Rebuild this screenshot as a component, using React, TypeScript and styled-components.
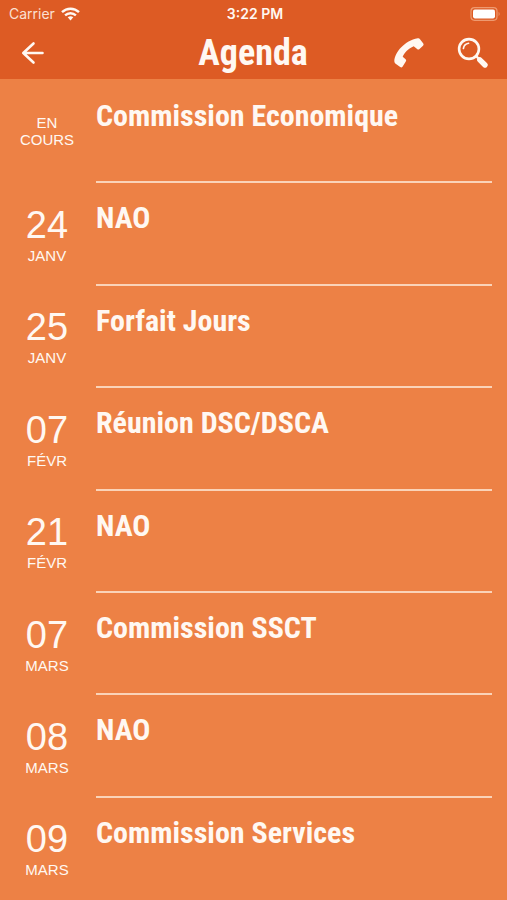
import React from "react";
import styled, { createGlobalStyle } from "styled-components";

const GlobalStyle = createGlobalStyle`
  * { box-sizing: border-box; }
  body { margin: 0; background: #ed8145; }
`;

const Screen = styled.div`
  display: flex;
  flex-direction: column;
  min-height: 100vh;
  background: #ed8145;
  color: #fff8f2;
  font-family: "Liberation Sans", Arial, sans-serif;
`;

const Header = styled.header`
  background: #dd5b24;
`;

const StatusBar = styled.div`
  display: grid;
  grid-template-columns: 1fr auto 1fr;
  align-items: center;
  height: 28px;
  padding: 0 6px 0 9px;
  font-family: Inter, "Liberation Sans", sans-serif;
  font-size: 14px;
  line-height: 18px;
`;

const Carrier = styled.span`
  display: flex;
  align-items: center;
  gap: 6px;
  color: #fbe0d2;
`;

const Clock = styled.time`
  font-weight: 600;
`;

const Battery = styled.span`
  display: flex;
  justify-content: flex-end;
`;

const NavBar = styled.nav`
  display: grid;
  grid-template-columns: 1fr auto 1fr;
  align-items: center;
  height: 51px;
  padding: 0 17px 2px 16px;
`;

const Title = styled.h1`
  margin: 0;
  font-family: "Roboto Condensed", "Arial Narrow", "Liberation Sans", sans-serif;
  font-size: 36px;
  line-height: 40px;
  font-weight: 700;
`;

const Actions = styled.div`
  display: flex;
  justify-content: flex-end;
  gap: 30px;
`;

const IconButton = styled.button`
  display: flex;
  align-items: center;
  justify-content: center;
  width: 34px;
  height: 40px;
  padding: 0;
  border: 0;
  background: none;
  color: #fff8f2;
  cursor: pointer;
`;

const List = styled.ul`
  flex: 1;
  display: grid;
  grid-auto-rows: 1fr;
  margin: 0;
  padding: 2px 15px 0 0;
  list-style: none;
`;

const Row = styled.li`
  display: grid;
  grid-template-columns: 94px 1fr;
  column-gap: 2px;
  min-height: 100px;
`;

const DateCell = styled.div`
  display: flex;
  flex-direction: column;
  align-items: center;
  justify-content: center;
  padding-bottom: 2px;
  text-align: center;
`;

const Day = styled.span`
  font-size: 38px;
  line-height: 44px;
`;

const Month = styled.span`
  max-width: 64px;
  font-size: 15px;
  line-height: 17px;
`;

const EventCell = styled.div`
  padding-top: 16px;
  border-bottom: 2px solid #fad3b8;

  ${Row}:last-child & {
    border-bottom: 0;
  }
`;

const EventTitle = styled.h2`
  margin: 0;
  font-family: "Roboto Condensed", "Arial Narrow", "Liberation Sans", sans-serif;
  font-size: 30px;
  line-height: 38px;
  font-weight: 700;
`;

type AgendaEvent = { day?: string; label: string; title: string };

const events: AgendaEvent[] = [
  { label: "EN COURS", title: "Commission Economique" },
  { day: "24", label: "JANV", title: "NAO" },
  { day: "25", label: "JANV", title: "Forfait Jours" },
  { day: "07", label: "FÉVR", title: "Réunion DSC/DSCA" },
  { day: "21", label: "FÉVR", title: "NAO" },
  { day: "07", label: "MARS", title: "Commission SSCT" },
  { day: "08", label: "MARS", title: "NAO" },
  { day: "09", label: "MARS", title: "Commission Services" },
];

const WifiIcon = () => (
  <svg width="19" height="14" viewBox="0 0 19 14" fill="none" stroke="#fff8f2" strokeWidth="2.4" aria-hidden="true">
    <path d="M1 5.2C5.8.6 13.2.6 18 5.2" />
    <path d="M4.1 8.4C7.2 5.5 11.8 5.5 14.9 8.4" />
    <path d="M6.7 10.3Q9.5 8 12.3 10.3L9.5 13.5Z" fill="#fff8f2" stroke="none" />
  </svg>
);

const BatteryIcon = () => (
  <svg width="31" height="14" viewBox="0 0 31 14" aria-hidden="true">
    <rect x="1" y=".7" width="26" height="12.6" rx="3.5" fill="none" stroke="#ee9a70" strokeWidth="1.2" />
    <rect x="3" y="2.6" width="22" height="8.8" rx="1.8" fill="#fff" />
    <path d="M28.6 4.8Q30.6 7 28.6 9.2Z" fill="#ee9a70" />
  </svg>
);

const BackIcon = () => (
  <svg width="24" height="24" viewBox="0 0 24 24" fill="none" stroke="currentColor" strokeWidth="2.6" strokeLinecap="round" strokeLinejoin="round" aria-hidden="true">
    <path d="M12.5 2.5 2.3 12l10.2 9.5M2.300 12H21.500" />
  </svg>
);

const PhoneIcon = () => (
  <svg width="32" height="32" viewBox="0 0 32 32" fill="currentColor" aria-hidden="true">
    <path d="M1.300 23.800C2 15.500 11.500 3.500 24.800 1.300Q26.200 1 27 2.200L30.300 6.500Q31.100 7.700 30 8.700L26.500 12Q25.300 13.100 24.100 12L20.700 9.200C15.500 11.300 11.300 15.500 9.700 19.700L12.600 22.300Q13.700 23.300 12.800 24.600L9.500 29.700Q8.500 31 7.200 30L2.300 26.600Q1.200 25.600 1.300 23.800Z" />
  </svg>
);

const SearchIcon = () => (
  <svg width="32" height="32" viewBox="0 0 32 32" fill="none" stroke="currentColor" strokeLinecap="round" aria-hidden="true">
    <circle cx="12" cy="12" r="9.9" strokeWidth="2.6" />
    <path d="M6.4 11.5C6.9 8.5 8.8 6.7 11.6 6.3" strokeWidth="1.6" />
    <path d="M19.2 19.2 22 22" strokeWidth="2.4" />
    <path d="M22.8 22.8 28 28" strokeWidth="5.4" />
  </svg>
);

export default function App() {
  return (
    <Screen>
      <GlobalStyle />
      <Header>
        <StatusBar>
          <Carrier>
            Carrier
            <WifiIcon />
          </Carrier>
          <Clock>3:22 PM</Clock>
          <Battery>
            <BatteryIcon />
          </Battery>
        </StatusBar>
        <NavBar>
          <IconButton type="button" aria-label="Retour">
            <BackIcon />
          </IconButton>
          <Title>Agenda</Title>
          <Actions>
            <IconButton type="button" aria-label="Appeler">
              <PhoneIcon />
            </IconButton>
            <IconButton type="button" aria-label="Rechercher">
              <SearchIcon />
            </IconButton>
          </Actions>
        </NavBar>
      </Header>
      <List>
        {events.map((event, index) => (
          <Row key={index}>
            <DateCell>
              {event.day && <Day>{event.day}</Day>}
              <Month>{event.label}</Month>
            </DateCell>
            <EventCell>
              <EventTitle>{event.title}</EventTitle>
            </EventCell>
          </Row>
        ))}
      </List>
    </Screen>
  );
}
